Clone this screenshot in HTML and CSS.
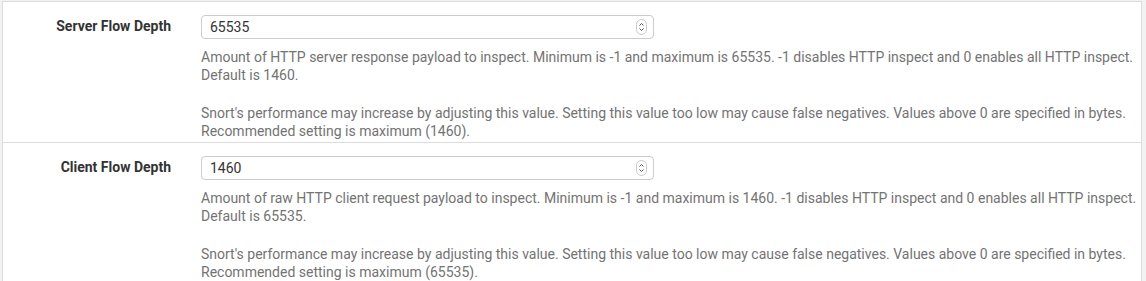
FILE: index.html
```html
<!DOCTYPE html>
<html lang="en">
<head>
    <meta charset="UTF-8">
    <title>HTTP Inspect</title>

    <link rel="stylesheet" href="styles.css">
</head>
<body>
    <div class="panel">
        <div class="form-group">
            <label class="control-label">Server Flow Depth</label>
            <div class="control">
                <div class="input">
                    <span>65535</span>
                    <svg class="spin" width="11" height="16" viewBox="0 0 11 16">
                        <rect x="0.5" y="0.5" width="10" height="15" rx="5" fill="#fff" stroke="#c8c8c8"/>
                        <path d="M3.5 6.5 L5.5 4.5 L7.5 6.5 M3.5 9.5 L5.5 11.5 L7.5 9.5" fill="none" stroke="#555" stroke-width="1"/>
                    </svg>
                </div>
                <div class="help-block">
                    Amount of HTTP server response payload to inspect. Minimum is -1 and maximum is 65535. -1 disables HTTP inspect and 0 enables all HTTP inspect.<br>
                    Default is 1460.
                </div>
                <div class="help-block note">
                    Snort's performance may increase by adjusting this value. Setting this value too low may cause false negatives. Values above 0 are specified in bytes.<br>
                    Recommended setting is maximum (1460).
                </div>
            </div>
        </div>

        <div class="form-group">
            <label class="control-label">Client Flow Depth</label>
            <div class="control">
                <div class="input">
                    <span>1460</span>
                    <svg class="spin" width="11" height="16" viewBox="0 0 11 16">
                        <rect x="0.5" y="0.5" width="10" height="15" rx="5" fill="#fff" stroke="#c8c8c8"/>
                        <path d="M3.5 6.5 L5.5 4.5 L7.5 6.5 M3.5 9.5 L5.5 11.5 L7.5 9.5" fill="none" stroke="#555" stroke-width="1"/>
                    </svg>
                </div>
                <div class="help-block">
                    Amount of raw HTTP client request payload to inspect. Minimum is -1 and maximum is 1460. -1 disables HTTP inspect and 0 enables all HTTP inspect.<br>
                    Default is 65535.
                </div>
                <div class="help-block note">
                    Snort's performance may increase by adjusting this value. Setting this value too low may cause false negatives. Values above 0 are specified in bytes.<br>
                    Recommended setting is maximum (65535).
                </div>
            </div>
        </div>
    </div>
</body>
</html>
```

FILE: styles.css
```css
* {
    margin: 0;
    padding: 0;
    box-sizing: border-box;
}

body {
    background-color: #f2f2f2;
    padding: 1px 4px 0 2px;
    font-family: Roboto, "Liberation Sans", sans-serif;
    color: #333;
}

.panel {
    background-color: #fff;
    border: 1px solid #ddd;
    border-bottom: none;
    height: 290px;
}

.form-group {
    display: flex;
    padding: 13px 0 2px;
    border-bottom: 1px solid #ddd;
}

.control-label {
    width: 168px;
    text-align: right;
    font-size: 14px;
    font-weight: bold;
    padding-top: 3px;
}

.control {
    margin-left: 30px;
    flex: 1;
}

.input {
    width: 453px;
    height: 24px;
    border: 1px solid #ccc;
    border-radius: 4px;
    display: flex;
    align-items: center;
    justify-content: space-between;
    padding: 0 6px 0 8px;
    font-size: 14px;
    color: #333;
}

.help-block {
    margin-top: 9px;
    font-size: 14px;
    line-height: 18px;
    color: #737373;
    white-space: nowrap;
}

.help-block.note {
    margin-top: 20px;
}
```
